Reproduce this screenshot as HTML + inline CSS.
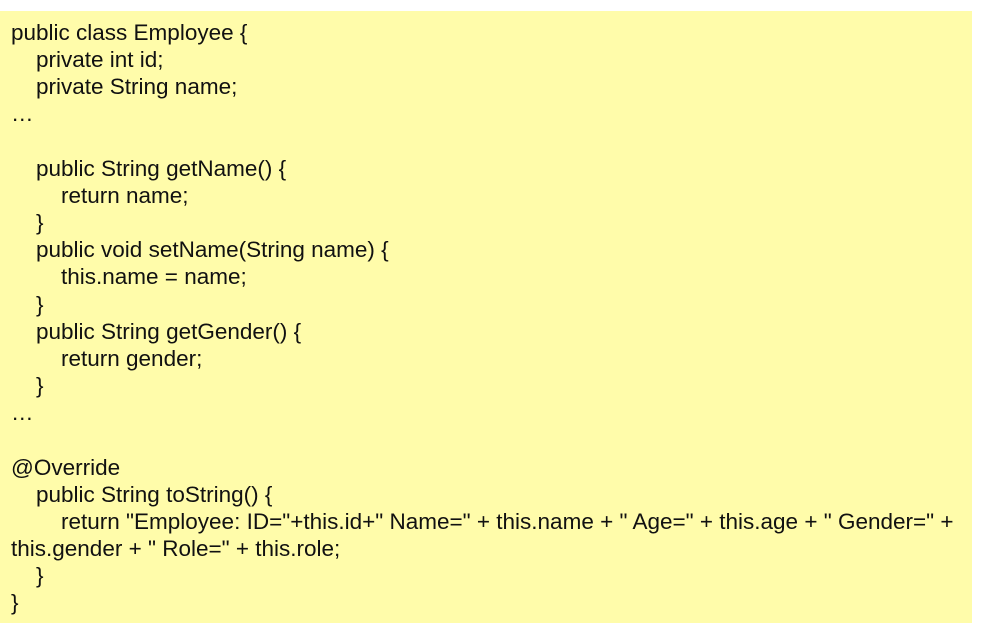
<!DOCTYPE html>
<html><head><meta charset="utf-8"><style>
html,body{margin:0;padding:0;background:#fff;width:982px;height:623px;overflow:hidden}
.box{position:absolute;left:0;top:11px;width:972px;height:612px;background:#fffcaa}
.t{position:absolute;left:11px;top:8px;font-family:"Liberation Sans",Arial,sans-serif;font-size:22.5px;line-height:27.15px;color:#111;white-space:pre}
.a{padding-left:25px}.b{padding-left:50px}
</style></head><body><div class="box"><div class="t"><div>public class Employee {</div><div class="a">private int id;</div><div class="a">private String name;</div><div>…</div><div> </div><div class="a">public String getName() {</div><div class="b">return name;</div><div class="a">}</div><div class="a">public void setName(String name) {</div><div class="b">this.name = name;</div><div class="a">}</div><div class="a">public String getGender() {</div><div class="b">return gender;</div><div class="a">}</div><div>…</div><div> </div><div>@Override</div><div class="a">public String toString() {</div><div class="b">return "Employee: ID="+this.id+" Name=" + this.name + " Age=" + this.age + " Gender=" +</div><div>this.gender + " Role=" + this.role;</div><div class="a">}</div><div>}</div></div></div></body></html>
